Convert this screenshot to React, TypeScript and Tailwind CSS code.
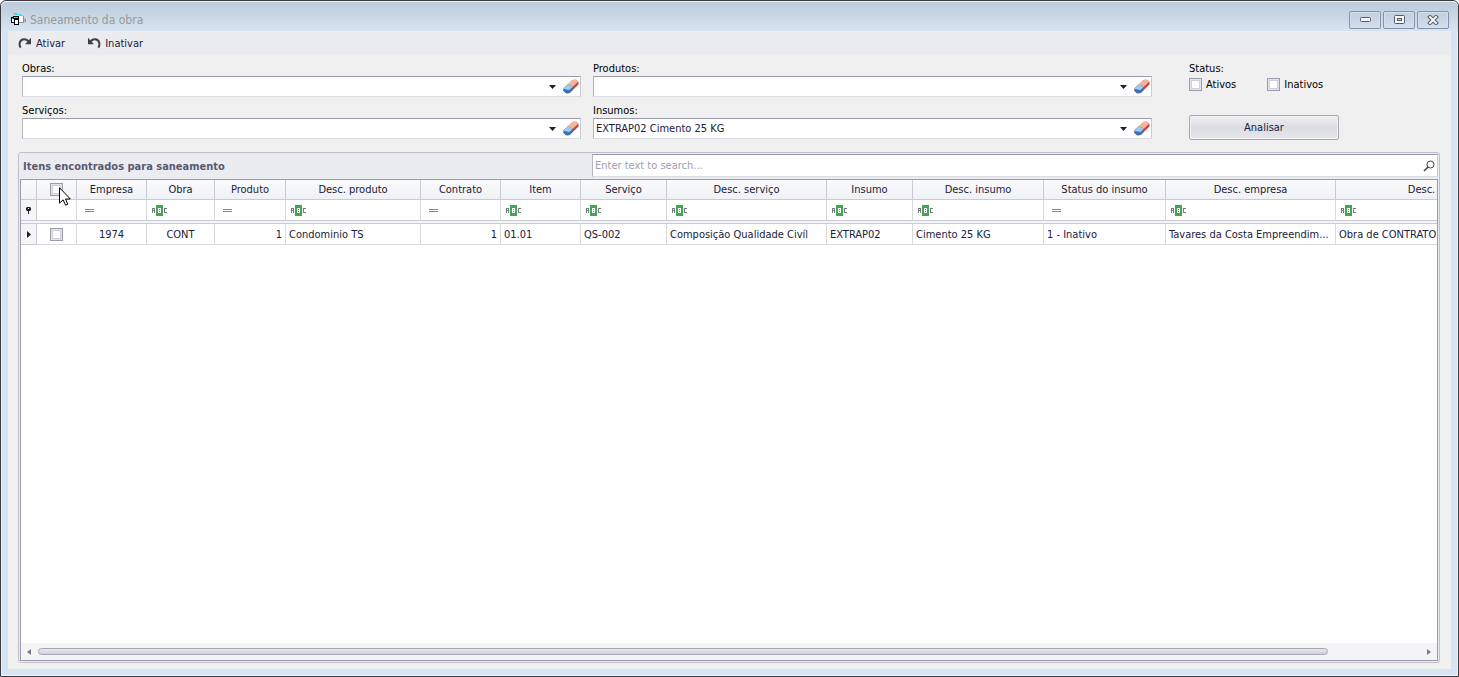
import type { ReactNode } from "react";

type Column = {
  title: string;
  width: string;
  filter: "abc" | "eq";
  value: string;
  align: string;
};

const columns: Column[] = [
  { title: "Empresa", width: "w-[70px]", filter: "eq", value: "1974", align: "text-center" },
  { title: "Obra", width: "w-[68px]", filter: "abc", value: "CONT", align: "text-center" },
  { title: "Produto", width: "w-[71px]", filter: "eq", value: "1", align: "text-right" },
  { title: "Desc. produto", width: "w-[135px]", filter: "abc", value: "Condominio TS", align: "text-left" },
  { title: "Contrato", width: "w-[80px]", filter: "eq", value: "1", align: "text-right" },
  { title: "Item", width: "w-[80px]", filter: "abc", value: "01.01", align: "text-left" },
  { title: "Serviço", width: "w-[86px]", filter: "abc", value: "QS-002", align: "text-left" },
  { title: "Desc. serviço", width: "w-[160px]", filter: "abc", value: "Composição Qualidade Civíl", align: "text-left" },
  { title: "Insumo", width: "w-[86px]", filter: "abc", value: "EXTRAP02", align: "text-left" },
  { title: "Desc. insumo", width: "w-[131px]", filter: "abc", value: "Cimento 25 KG", align: "text-left" },
  { title: "Status do insumo", width: "w-[122px]", filter: "eq", value: "1 - Inativo", align: "text-left" },
  { title: "Desc. empresa", width: "w-[170px]", filter: "abc", value: "Tavares da Costa Empreendim...", align: "text-left" },
  { title: "Desc.", width: "w-[172px]", filter: "abc", value: "Obra de CONTRATO", align: "text-left" },
];

function FormIcon() {
  return (
    <svg width="15" height="13" viewBox="0 0 15 13" shapeRendering="crispEdges">
      <path d="M5 2h7v1h1v7H8V5H5z" fill="#fff" />
      <path d="M2 0h4v1h4v1h2v1H8V2H4V1H2z" fill="#2fe0e6" />
      <path d="M12 3h1v6h-1zM8 9h5v1H8zM14 6h1v3h-1z" fill="#8c8f94" />
      <path d="M13 5h1v5h-1z" fill="#b9bcc0" />
      <path d="M2 3h6v9H3v-2H0V4h2z" fill="#000" />
      <path d="M1 6h2v3H1zM4 7h3v4H4z" fill="#fff" />
      <path d="M3 4h4v1H3zM1 5h1v1H1z" fill="#2fe0e6" />
    </svg>
  );
}

function TurnIcon({ flip = false }: { flip?: boolean }) {
  return (
    <svg width="14" height="12" viewBox="0 0 14 12" className={flip ? "-scale-x-100" : ""}>
      <path d="M2.6 10.6C.6 7.5 1.6 2.5 5.8 2.2 8 2 9.3 3 10.4 4.2" fill="none" stroke="#3f3f46" strokeWidth="2" />
      <path d="M13 .8v6.4H7z" fill="#3f3f46" />
    </svg>
  );
}

function EraserIcon() {
  return (
    <svg width="16" height="15" viewBox="0 0 16 15">
      <path d="M.5 9.500 9 1.500q.8-.8 2-.8h2.200L15.500 3v2.500L7.200 13.500q-.8.800-2 .8H3L.5 12z" fill="#cf4030" />
      <path d="M.5 9.500 9 1.500q.8-.8 2-.8h2.200L15 2.500 6.800 10.300z" fill="#f0b79f" />
      <path d="M.5 9.500 4.800 5.400 10 7.500v3.300L7.200 13.500q-.8.800-2 .8H3L.5 12z" fill="#3a72b8" />
      <path d="M.5 9.500 4.800 5.400 9.600 7.600 6.300 10.800z" fill="#9accf3" />
      <path d="M.5 9.500 6.300 10.800 15 2.600" fill="none" stroke="#fff" strokeOpacity=".3" />
    </svg>
  );
}

function AbcIcon() {
  return (
    <svg width="16" height="11" viewBox="0 0 16 11" shapeRendering="crispEdges">
      <path d="M0 3h3v5H2V6H1v2H0zM1 4v1h1V4z" fill="#777985" fillRule="evenodd" />
      <path d="M4 0h7v11H4z" fill="#3faa4b" />
      <path d="M6 3h3v5H6zM7 4v1h1V4zM7 6v1h1V6z" fill="#fff" fillRule="evenodd" />
      <path d="M12 3h3v1h-2v3h2v1h-3z" fill="#777985" />
    </svg>
  );
}

function EqualIcon() {
  return (
    <svg width="9" height="11" viewBox="0 0 9 11" shapeRendering="crispEdges">
      <path d="M0 4h9v1H0zM0 6h9v1H0z" fill="#858594" />
    </svg>
  );
}

function Tick({ label }: { label: string }) {
  return (
    <input
      type="checkbox"
      aria-label={label}
      className="block size-[13px] shrink-0 appearance-none border border-[#9a9cac] bg-white shadow-[inset_0_0_0_1px_#e3e4ea,inset_0_0_0_2px_#cfd0dc]"
    />
  );
}

function CaptionButton({ label, children }: { label: string; children: ReactNode }) {
  return (
    <button
      type="button"
      aria-label={label}
      className="flex h-[18px] w-8 items-center justify-center rounded-[2px] border border-[#8291ac] bg-linear-to-b from-[#c1cedd] to-[#d3dfec] shadow-[inset_0_0_0_1px_#d5e0eb]"
    >
      {children}
    </button>
  );
}

function Lookup({ id, label, value = "" }: { id: string; label: string; value?: string }) {
  return (
    <div className="min-w-0">
      <label htmlFor={id} className="block h-[15px] leading-[15px] text-black">
        {label}
      </label>
      <div className="flex h-[21px] items-center border border-t-[#9a9cac] border-r-[#c9cad4] border-b-[#dcdde3] border-l-[#b5b6c4] bg-white">
        <input id={id} defaultValue={value} className="h-full min-w-0 flex-1 px-0.5 outline-none" />
        <button type="button" aria-label={`Abrir ${label}`} className="flex h-full w-5 items-center justify-center">
          <svg width="7" height="4" viewBox="0 0 7 4">
            <path d="M0 0h7L3.500 4z" fill="#1e1e2e" />
          </svg>
        </button>
        <button type="button" aria-label={`Limpar ${label}`} className="flex h-full w-[18px] items-center justify-center">
          <EraserIcon />
        </button>
      </div>
    </div>
  );
}

function Grid() {
  return (
    <table className="w-[1447px] table-fixed border-separate border-spacing-0 whitespace-nowrap">
      <colgroup>
        <col className="w-4" />
        <col className="w-10" />
        {columns.map((c) => (
          <col key={c.title} className={c.width} />
        ))}
      </colgroup>
      <thead>
        <tr className="h-5 bg-linear-to-b from-[#fafafb] to-[#f0f1f4]">
          <th className="border-r border-b border-[#c9cad4] p-0" />
          <th className="border-r border-b border-[#c9cad4] p-0">
            <div className="flex justify-center">
              <Tick label="Selecionar todos" />
            </div>
          </th>
          {columns.map((c) => (
            <th key={c.title} className="border-r border-b border-[#c9cad4] p-0 font-normal">
              {c.title}
            </th>
          ))}
        </tr>
      </thead>
      <tbody>
        <tr className="h-[21px]">
          <td className="border-r border-b border-[#c9cad4] bg-[#f5f5f7] p-0">
            <svg width="5" height="7" viewBox="0 0 5 7" className="mx-auto">
              <path d="M1 0h3l1 1v2L4 4H3v3H2V4H1L0 3V1z" fill="#1e1e2e" />
              <path d="M2 1h1v1H2z" fill="#fff" />
            </svg>
          </td>
          <td className="border-r border-b border-[#d9dae0] border-b-[#c9cad4] p-0" />
          {columns.map((c) => (
            <td key={c.title} className="border-r border-b border-r-[#d9dae0] border-b-[#c9cad4] p-0">
              <div className={c.filter === "abc" ? "pl-[5px]" : "pl-2"}>
                {c.filter === "abc" ? <AbcIcon /> : <EqualIcon />}
              </div>
            </td>
          ))}
        </tr>
        <tr className="h-[3px]">
          <td colSpan={15} className="h-[3px] border-b border-[#c9cad4] bg-[#f5f5f7] p-0" />
        </tr>
        <tr className="h-[21px]">
          <td className="border-r border-b border-[#c9cad4] bg-[#f5f5f7] p-0">
            <svg width="4" height="7" viewBox="0 0 4 7" className="mx-auto">
              <path d="M0 0l4 3.500L0 7z" fill="#1e1e2e" />
            </svg>
          </td>
          <td className="border-r border-b border-[#d9dae0] p-0">
            <div className="flex justify-center">
              <Tick label="Selecionar linha" />
            </div>
          </td>
          {columns.map((c) => (
            <td key={c.title} className={`truncate border-r border-b border-[#d9dae0] py-0 pr-[3px] pl-[3px] ${c.align}`}>
              {c.value}
            </td>
          ))}
        </tr>
      </tbody>
    </table>
  );
}

export default function App() {
  return (
    <div className="bg-white font-['DejaVu_Sans_Condensed','DejaVu_Sans',sans-serif] text-[11px] leading-[15px] text-[#20203a]">
      <div className="flex h-screen flex-col rounded-t-md border border-[#3c3c40] bg-[#d7e4f1] px-[7px] pb-[7px] shadow-[inset_0_0_0_1px_#edf3f9]">
        {/* Title bar */}
        <header className="-mx-[7px] flex h-[30px] shrink-0 items-center justify-between rounded-t-md border-t border-[#edf3f9] bg-linear-to-b from-[#bccbd9] to-[#d7e4f1] pt-1.5 pr-[9px] pl-[10px]">
          <div className="flex items-center gap-1">
            <FormIcon />
            <h1 className="text-xs leading-4 text-[#999]">Saneamento da obra</h1>
          </div>
          <div className="flex gap-0.5">
            <CaptionButton label="Minimizar">
              <svg width="11" height="5" viewBox="0 0 11 5">
                <rect x=".5" y=".5" width="10" height="4" rx="1" fill="#f6f6f6" stroke="#555b6e" />
              </svg>
            </CaptionButton>
            <CaptionButton label="Maximizar">
              <svg width="11" height="9" viewBox="0 0 11 9">
                <rect x=".5" y=".5" width="10" height="8" rx="1" fill="#f6f6f6" stroke="#555b6e" />
                <rect x="3.500" y="3.500" width="4" height="2" fill="#c9d5e3" stroke="#555b6e" />
              </svg>
            </CaptionButton>
            <CaptionButton label="Fechar">
              <svg width="12" height="10" viewBox="0 0 12 10" fill="none" strokeLinecap="square">
                <path d="M3 2l6 6M9 2L3 8" stroke="#555b6e" strokeWidth="4" />
                <path d="M3 2l6 6M9 2L3 8" stroke="#f6f6f6" strokeWidth="2" />
              </svg>
            </CaptionButton>
          </div>
        </header>

        <main className="flex min-h-0 flex-1 flex-col bg-[#f0f0f0]">
          {/* Toolbar */}
          <div className="flex h-6 shrink-0 items-center gap-[22px] bg-[#ebecf0] pl-2.5">
            <button type="button" className="flex items-center gap-1">
              <TurnIcon />
              Ativar
            </button>
            <button type="button" className="flex items-center gap-1">
              <TurnIcon flip />
              Inativar
            </button>
          </div>

          {/* Filters */}
          <div className="flex pt-1.5 pl-3.5">
            <div className="grid w-[1130px] grid-cols-2 gap-x-3 gap-y-[5px]">
              <Lookup id="obras" label="Obras:" />
              <Lookup id="produtos" label="Produtos:" />
              <Lookup id="servicos" label="Serviços:" />
              <Lookup id="insumos" label="Insumos:" value="EXTRAP02 Cimento 25 KG" />
            </div>
            <div className="ml-[37px] w-[150px] text-black">
              <p>Status:</p>
              <div className="mt-px flex gap-[31px]">
                <label className="flex items-center gap-1">
                  <Tick label="Ativos" />
                  Ativos
                </label>
                <label className="flex items-center gap-1">
                  <Tick label="Inativos" />
                  Inativos
                </label>
              </div>
              <button
                type="button"
                className="mt-[23px] h-[25px] w-full rounded-[2px] border border-[#a5a7b4] bg-linear-to-b from-[#f0f0f3] via-[#dcdde3] to-[#e6e7eb] text-[#20203a] shadow-[inset_0_0_0_1px_#f3f3f6]"
              >
                Analisar
              </button>
            </div>
          </div>

          {/* Results */}
          <section className="mt-3 mr-[11px] mb-1.5 ml-2.5 flex min-h-0 flex-1 flex-col rounded-[3px] border border-[#bfc0cb] bg-[#ebecf0] p-px">
            <div className="flex h-[25px] shrink-0">
              <h2 className="w-[572px] pt-[5px] pl-[3px] font-bold text-[#5a5a70]">Itens encontrados para saneamento</h2>
              <div className="flex h-[23px] flex-1 items-center border border-t-[#9a9cac] border-r-[#c9cad4] border-b-[#dcdde3] border-l-[#b5b6c4] bg-white pr-0.5">
                <input
                  type="text"
                  aria-label="Search"
                  placeholder="Enter text to search..."
                  className="h-full min-w-0 flex-1 px-0.5 outline-none placeholder:text-[#a0a0ae]"
                />
                <button type="button" aria-label="Pesquisar">
                  <svg width="12" height="12" viewBox="0 0 12 12" fill="none" stroke="#3a3a4e">
                    <circle cx="7.500" cy="4.500" r="3.500" />
                    <path d="M5 7 1 11" strokeWidth="1.500" />
                  </svg>
                </button>
              </div>
            </div>
            <div className="flex min-h-0 flex-1 flex-col overflow-hidden border border-[#9a9cac] bg-white">
              <div className="relative min-h-0 flex-1 overflow-hidden">
                <Grid />
                <svg width="12" height="19" viewBox="0 0 12 19" className="pointer-events-none absolute top-[7px] left-[38px]">
                  <path d="M.5.700v15.500l3.600-3.400 2.400 5.400 2.300-1-2.300-5.200h4.800z" fill="#fff" stroke="#000" />
                </svg>
              </div>
              {/* Horizontal scroll bar */}
              <div className="flex h-[17px] shrink-0 items-center bg-[#f4f4f6] px-1.5">
                <svg width="4" height="6" viewBox="0 0 4 6">
                  <path d="M4 0v6L0 3z" fill="#77798a" />
                </svg>
                <div className="mx-[7px] flex-1">
                  <div className="h-[7px] w-14/15 rounded-full border border-[#a5a7b4] bg-linear-to-b from-[#e9e9ed] to-[#d0d1d9]" />
                </div>
                <svg width="4" height="6" viewBox="0 0 4 6">
                  <path d="M0 0v6l4-3z" fill="#77798a" />
                </svg>
              </div>
            </div>
          </section>
        </main>
      </div>
    </div>
  );
}
